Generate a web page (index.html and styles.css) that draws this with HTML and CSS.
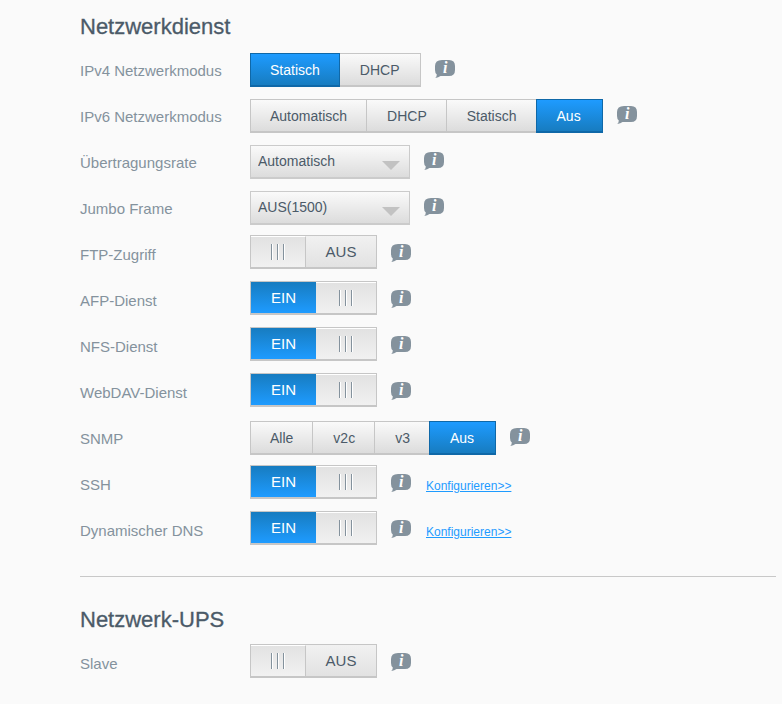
FILE: index.html
```html
<!DOCTYPE html>
<html lang="de">
<head>
  <meta charset="UTF-8" />
  <meta name="viewport" content="width=device-width, initial-scale=1" />
  <title>Netzwerk</title>
  <link rel="stylesheet" href="styles.css">
</head>
<body>
  <!-- Shared info bubble -->
  <svg class="sprite" aria-hidden="true">
    <symbol id="info" viewBox="0 0 21 18">
      <path d="M7 0H14Q20 0 20 6V10Q20 16 14 16H5.500Q3.500 17.600 0.300 18Q1.800 16.500 1.800 14.500Q0 13 0 10V6Q0 0 7 0Z"/>
      <text x="8" y="13">i</text>
    </symbol>
  </svg>

  <main>
    <section>
      <h2>Netzwerkdienst</h2>

      <div class="row" role="radiogroup" aria-labelledby="ipv4-label">
        <span class="label" id="ipv4-label">IPv4 Netzwerkmodus</span>
        <div class="group">
          <label><input type="radio" name="ipv4" checked><span>Statisch</span></label>
          <label><input type="radio" name="ipv4"><span>DHCP</span></label>
        </div>
        <button type="button" class="info" aria-label="Info"><svg><use href="#info"/></svg></button>
      </div>

      <div class="row" role="radiogroup" aria-labelledby="ipv6-label">
        <span class="label" id="ipv6-label">IPv6 Netzwerkmodus</span>
        <div class="group">
          <label><input type="radio" name="ipv6"><span>Automatisch</span></label>
          <label><input type="radio" name="ipv6"><span>DHCP</span></label>
          <label><input type="radio" name="ipv6"><span>Statisch</span></label>
          <label><input type="radio" name="ipv6" checked><span>Aus</span></label>
        </div>
        <button type="button" class="info" aria-label="Info"><svg><use href="#info"/></svg></button>
      </div>

      <div class="row">
        <label class="label" for="speed">Übertragungsrate</label>
        <div class="select">
          <select id="speed">
            <option>Automatisch</option>
          </select>
        </div>
        <button type="button" class="info" aria-label="Info"><svg><use href="#info"/></svg></button>
      </div>

      <div class="row">
        <label class="label" for="jumbo">Jumbo Frame</label>
        <div class="select">
          <select id="jumbo">
            <option>AUS(1500)</option>
          </select>
        </div>
        <button type="button" class="info" aria-label="Info"><svg><use href="#info"/></svg></button>
      </div>

      <div class="row">
        <label class="label" for="ftp">FTP-Zugriff</label>
        <label class="toggle">
          <input type="checkbox" id="ftp">
          <span class="on">EIN</span><span class="handle"><i></i><i></i><i></i></span><span class="off">AUS</span>
        </label>
        <button type="button" class="info" aria-label="Info"><svg><use href="#info"/></svg></button>
      </div>

      <div class="row">
        <label class="label" for="afp">AFP-Dienst</label>
        <label class="toggle">
          <input type="checkbox" id="afp" checked>
          <span class="on">EIN</span><span class="handle"><i></i><i></i><i></i></span><span class="off">AUS</span>
        </label>
        <button type="button" class="info" aria-label="Info"><svg><use href="#info"/></svg></button>
      </div>

      <div class="row">
        <label class="label" for="nfs">NFS-Dienst</label>
        <label class="toggle">
          <input type="checkbox" id="nfs" checked>
          <span class="on">EIN</span><span class="handle"><i></i><i></i><i></i></span><span class="off">AUS</span>
        </label>
        <button type="button" class="info" aria-label="Info"><svg><use href="#info"/></svg></button>
      </div>

      <div class="row">
        <label class="label" for="webdav">WebDAV-Dienst</label>
        <label class="toggle">
          <input type="checkbox" id="webdav" checked>
          <span class="on">EIN</span><span class="handle"><i></i><i></i><i></i></span><span class="off">AUS</span>
        </label>
        <button type="button" class="info" aria-label="Info"><svg><use href="#info"/></svg></button>
      </div>

      <div class="row" role="radiogroup" aria-labelledby="snmp-label">
        <span class="label" id="snmp-label">SNMP</span>
        <div class="group">
          <label><input type="radio" name="snmp"><span>Alle</span></label>
          <label><input type="radio" name="snmp"><span>v2c</span></label>
          <label><input type="radio" name="snmp"><span>v3</span></label>
          <label><input type="radio" name="snmp" checked><span>Aus</span></label>
        </div>
        <button type="button" class="info" aria-label="Info"><svg><use href="#info"/></svg></button>
      </div>

      <div class="row">
        <label class="label" for="ssh">SSH</label>
        <label class="toggle">
          <input type="checkbox" id="ssh" checked>
          <span class="on">EIN</span><span class="handle"><i></i><i></i><i></i></span><span class="off">AUS</span>
        </label>
        <button type="button" class="info" aria-label="Info"><svg><use href="#info"/></svg></button>
        <a class="configure" href="#ssh">Konfigurieren&gt;&gt;</a>
      </div>

      <div class="row">
        <label class="label" for="ddns">Dynamischer DNS</label>
        <label class="toggle">
          <input type="checkbox" id="ddns" checked>
          <span class="on">EIN</span><span class="handle"><i></i><i></i><i></i></span><span class="off">AUS</span>
        </label>
        <button type="button" class="info" aria-label="Info"><svg><use href="#info"/></svg></button>
        <a class="configure" href="#ddns">Konfigurieren&gt;&gt;</a>
      </div>
    </section>

    <hr>

    <section>
      <h2>Netzwerk-UPS</h2>

      <div class="row">
        <label class="label" for="slave">Slave</label>
        <label class="toggle">
          <input type="checkbox" id="slave">
          <span class="on">EIN</span><span class="handle"><i></i><i></i><i></i></span><span class="off">AUS</span>
        </label>
        <button type="button" class="info" aria-label="Info"><svg><use href="#info"/></svg></button>
      </div>
    </section>
  </main>
</body>
</html>
```
FILE: styles.css
```css
* {
  box-sizing: border-box;
  margin: 0;
  padding: 0;
}
body {
  background: #fafafa;
  color: #4b5a68;
  font-family: "Liberation Sans", Arial, Helvetica, sans-serif;
  font-size: 14px;
}
main {
  padding: 14px 6px 16px 80px;
}
.sprite {
  display: none;
}
h2 {
  font-size: 22px;
  font-weight: 400;
  line-height: 26px;
  margin-bottom: 7px;
  -webkit-text-stroke: 0.3px currentColor;
}
hr {
  border: none;
  border-top: 1px solid #c8c8c8;
  margin: 23px 0 30px;
}

/* One setting per row */
.row {
  display: flex;
  align-items: center;
  min-height: 46px;
}
.label {
  flex: none;
  width: 170px;
  font-size: 15px;
  color: #84929d;
}

/* The native inputs stay focusable but are not drawn */
.group input,
.toggle input {
  position: absolute;
  opacity: 0;
  pointer-events: none;
}

/* Segmented buttons */
.group {
  display: flex;
}
.group label {
  cursor: pointer;
}
.group label + label {
  margin-left: -1px;
}
.group span {
  display: block;
  height: 34px;
  padding: 0 19px 0 20px;
  line-height: 32px;
  border: 1px solid #c6c6c6;
  border-bottom-width: 2px;
  background: linear-gradient(#fafafa, #dcdcdc);
  white-space: nowrap;
}
.group label:first-child span {
  padding-left: 19px;
}
.group label:last-child span {
  padding-right: 21px;
}
.group input:checked + span {
  position: relative;
  background: linear-gradient(#1e9bff, #177cc0);
  border-color: #0f68a8;
  color: #fff;
}

/* Drop-down */
.select {
  display: grid;
  align-items: center;
  width: 160px;
}
.select select,
.select::after {
  grid-area: 1 / 1;
}
.select select {
  appearance: none;
  width: 100%;
  height: 34px;
  padding: 0 32px 2px 7px;
  border: 1px solid #cbcbcb;
  border-bottom-width: 2px;
  border-radius: 0;
  background: linear-gradient(#fafafa, #dcdcdc);
  color: inherit;
  font: inherit;
}
.select::after {
  content: "";
  justify-self: end;
  margin: 7px 10px 0 0;
  border: 9px solid transparent;
  border-top-color: #c2c2c2;
  border-bottom: none;
  pointer-events: none;
}

/* On/off switch */
.toggle {
  display: flex;
  width: 127px;
  height: 34px;
  margin-bottom: 4px;
  border: 1px solid #c6c6c6;
  border-bottom-width: 2px;
  font-size: 15px;
  line-height: 32px;
  text-align: center;
  cursor: pointer;
}
.toggle .on {
  display: none;
  width: 65px;
  background: linear-gradient(#177cc0, #1e9bff);
  color: #fff;
}
.toggle .off {
  flex: 1;
  background: linear-gradient(#f1f1f1, #e2e2e2);
}
.handle {
  display: flex;
  align-items: center;
  justify-content: center;
  gap: 4px;
  width: 55px;
  border-top: 1px solid #fff;
  border-right: 1px solid #c6c6c6;
  background: linear-gradient(#e2e2e2, #f1f1f1);
}
.handle i {
  width: 2px;
  height: 16px;
  border-left: 1px solid #84929d;
  background: #fff;
}
.toggle input:checked ~ .on {
  display: block;
}
.toggle input:checked ~ .handle {
  flex: 1;
  border-right: none;
}
.toggle input:checked ~ .off {
  display: none;
}

/* Info bubble */
.info {
  flex: none;
  margin: 0 0 2px 14px;
  border: none;
  background: none;
  cursor: pointer;
}
.info svg {
  display: block;
  width: 21px;
  height: 18px;
  fill: #84929d;
}
#info text {
  fill: #fff;
  font: italic bold 16px "Liberation Serif", "Times New Roman", serif;
}

.configure {
  margin-left: 14px;
  padding-top: 4px;
  font-size: 12px;
  color: #1e9bff;
}
```
